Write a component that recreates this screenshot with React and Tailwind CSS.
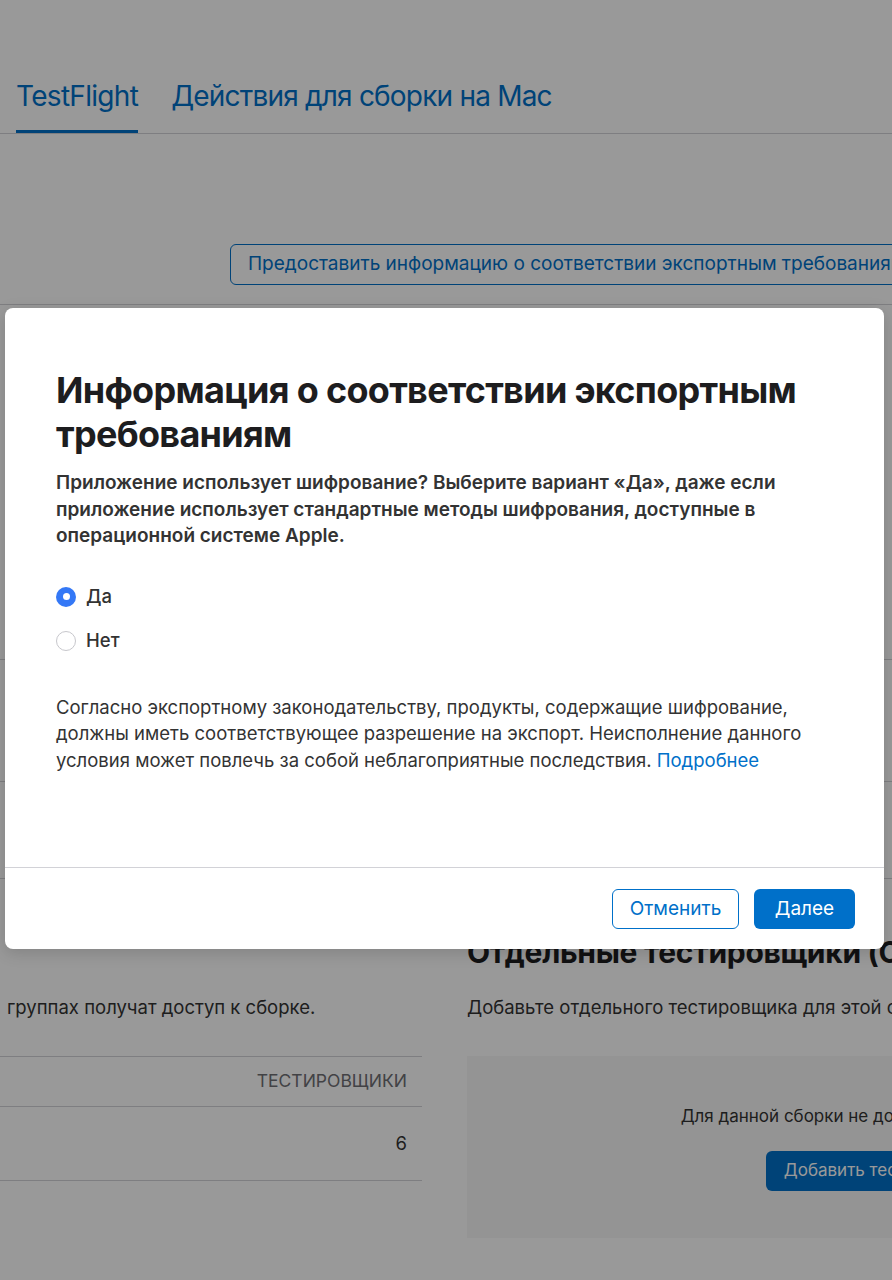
import { useState } from "react";

export default function App() {
  const [answer, setAnswer] = useState("yes");

  return (
    <div className="relative w-[892px] h-[1280px] overflow-hidden bg-white font-['Inter',sans-serif] text-[#1d1d1f]">
      {/* вкладки */}
      <nav className="flex items-end gap-[33px] pt-[78px] border-b border-[#d2d2d7]">
        <div className="ml-[16px] pb-[16px] border-b-[3px] border-[#0070c9] text-[28px] leading-[36px] text-[#0070c9] tracking-[-0.7px]">
          TestFlight
        </div>
        <div className="pb-[19px] text-[28px] leading-[36px] text-[#0070c9] tracking-[-0.8px]">
          Действия для сборки на Mac
        </div>
      </nav>

      <div className="mt-[110px] ml-[230px]">
        <button className="h-[41px] whitespace-nowrap rounded-[6px] border-[1.5px] border-[#0070c9] px-[17px] text-[19px] text-[#0070c9]">
          Предоставить информацию о соответствии экспортным требованиям
        </button>
      </div>

      {/* содержимое под модалкой */}
      <div className="mt-[19px] border-t border-[#d2d2d7]">
        <div className="h-[355px] border-b border-[#d2d2d7]" />
        <div className="h-[122px] border-b border-[#d2d2d7]" />
        <div className="h-[97px] border-b border-[#d2d2d7]" />
      </div>

      {/* группы и отдельные тестировщики */}
      <div className="grid grid-cols-[422px_848px] gap-[45px]">
        <div>
          <p className="mt-[116px] whitespace-nowrap pl-[7px] text-[18.5px] leading-[24px] text-[#333]">
            группах получат доступ к сборке.
          </p>
          <div className="mt-[37px] border-t border-[#d2d2d7]">
            <div className="flex h-[50px] items-center justify-end border-b border-[#d2d2d7] pr-[15px] text-[17.5px] uppercase text-[#6e6e73]">
              Тестировщики
            </div>
            <div className="flex h-[74px] items-center justify-end border-b border-[#d2d2d7] pr-[15px] text-[18.5px] text-[#333]">
              6
            </div>
          </div>
        </div>
        <div>
          <h3 className="mt-[55px] whitespace-nowrap text-[30px] font-bold leading-[36px] tracking-[-0.3px]">
            Отдельные тестировщики (Сборка)
          </h3>
          <p className="mt-[25px] whitespace-nowrap text-[18.5px] leading-[24px] text-[#333]">
            Добавьте отдельного тестировщика для этой сборки.
          </p>
          <div className="mt-[37px] flex h-[182px] flex-col items-center justify-center bg-[#f7f7f7]">
            <p className="whitespace-nowrap text-[17px] leading-[24px] text-[#333]">
              Для данной сборки не добавлено тестировщиков.
            </p>
            <button className="mt-[23px] h-[40px] whitespace-nowrap rounded-[6px] bg-[#0070c9] px-[18px] text-[17px] text-white">
              Добавить тестировщиков
            </button>
          </div>
        </div>
      </div>

      {/* затемнение */}
      <div className="absolute inset-0 bg-black/40" />

      {/* модальное окно */}
      <div className="absolute left-[5px] top-[308px] w-[879px] overflow-hidden rounded-[8px] bg-white shadow-[0_4px_16px_rgba(0,0,0,0.15)]">
        <div className="px-[51px] pt-[60px] pb-[94px]">
          <h2 className="text-[36px] font-bold leading-[44px] tracking-[-0.7px] text-[#1d1d1f]">
            Информация о соответствии экспортным требованиям
          </h2>
          <p className="mt-[14px] text-[19px] font-semibold leading-[26.5px] text-[#333]">
            Приложение использует шифрование? Выберите вариант «Да», даже если приложение использует стандартные методы шифрования, доступные в операционной системе Apple.
          </p>

          <div className="mt-[25px]">
            {[
              { id: "yes", label: "Да" },
              { id: "no", label: "Нет" },
            ].map((o) => (
              <label key={o.id} className="flex h-[44px] cursor-pointer items-center gap-[10px]">
                <span
                  onClick={() => setAnswer(o.id)}
                  className={`flex h-[20px] w-[20px] items-center justify-center rounded-full ${
                    answer === o.id ? "bg-[#3478f6]" : "border border-[#c7c7cc] bg-white"
                  }`}
                >
                  {answer === o.id && <span className="h-[7px] w-[7px] rounded-full bg-white" />}
                </span>
                <span className="text-[18.5px] font-medium text-[#333]">{o.label}</span>
              </label>
            ))}
          </div>

          <p className="mt-[31px] text-[18.5px] leading-[26.5px] text-[#333]">
            Согласно экспортному законодательству, продукты, содержащие шифрование, должны иметь соответствующее разрешение на экспорт. Неисполнение данного условия может повлечь за собой неблагоприятные последствия.{" "}
            <a className="text-[#0070c9]">Подробнее</a>
          </p>
        </div>

        <div className="flex justify-end gap-[15px] border-t border-[#d2d2d7] pt-[21px] pb-[20px] pr-[29px]">
          <button className="h-[40px] w-[127px] rounded-[6px] border border-[#0070c9] text-[19px] text-[#0070c9]">
            Отменить
          </button>
          <button className="h-[40px] w-[101px] rounded-[6px] bg-[#0070c9] text-[19px] text-white">
            Далее
          </button>
        </div>
      </div>
    </div>
  );
}
